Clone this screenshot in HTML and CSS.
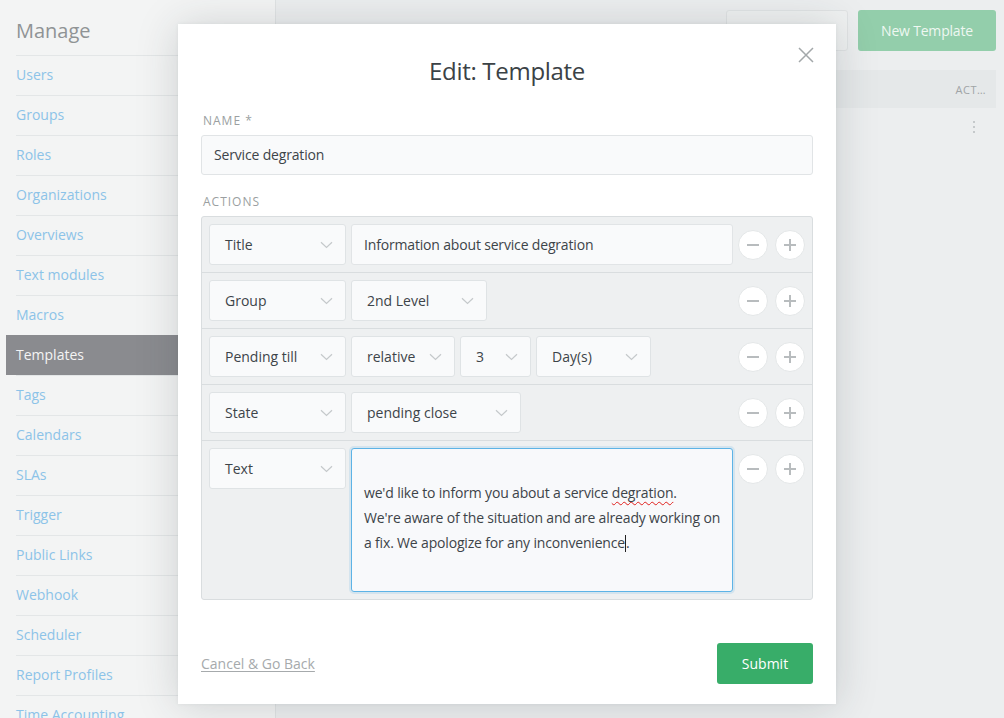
FILE: index.html
```html
<!DOCTYPE html>
<html lang="en">
<head>
<meta charset="utf-8">
<title>Edit: Template</title>
<link rel="stylesheet" href="styles.css">
</head>
<body>
<div class="page">
  <aside class="sidebar">
    <h2 class="side-title">Manage</h2>
    <nav class="side-nav">
      <a class="side-item">Users</a>
      <a class="side-item">Groups</a>
      <a class="side-item">Roles</a>
      <a class="side-item">Organizations</a>
      <a class="side-item">Overviews</a>
      <a class="side-item">Text modules</a>
      <a class="side-item">Macros</a>
      <a class="side-item active">Templates</a>
      <a class="side-item">Tags</a>
      <a class="side-item">Calendars</a>
      <a class="side-item">SLAs</a>
      <a class="side-item">Trigger</a>
      <a class="side-item">Public Links</a>
      <a class="side-item">Webhook</a>
      <a class="side-item">Scheduler</a>
      <a class="side-item">Report Profiles</a>
      <a class="side-item">Time Accounting</a>
    </nav>
  </aside>
  <main class="main">
    <div class="main-head">
      <h1 class="main-title">Templates</h1>
      <div class="head-actions">
        <button class="btn-plain">Import</button>
        <button class="btn-new">New Template</button>
      </div>
    </div>
    <div class="table-head"><span class="th-act">ACT…</span></div>
    <div class="table-row"><span class="kebab"><i></i><i></i><i></i></span></div>
  </main>
</div>

<div class="modal">
  <div class="modal-head">
    <h2 class="modal-title">Edit: Template</h2>
    <span class="close">
      <svg width="16" height="16" viewBox="0 0 16 16"><path d="M1 1L15 15M15 1L1 15" stroke="#a3a8aa" stroke-width="1.5" fill="none"/></svg>
    </span>
  </div>
  <div class="modal-body">
    <div class="label">Name *</div>
    <div class="input">Service degration</div>

    <div class="label label-actions">Actions</div>
    <div class="actions">
      <div class="row">
        <div class="select attr">Title<svg class="chev" width="13" height="8" viewBox="0 0 13 8"><path d="M1 1.2L6.5 6.5L12 1.2" stroke="#c5c9cb" stroke-width="1.2" fill="none"/></svg></div>
        <div class="values">
          <div class="input value-input">Information about service degration</div>
        </div>
        <div class="pm"><span class="circle minus"></span><span class="circle plus"></span></div>
      </div>
      <div class="row">
        <div class="select attr">Group<svg class="chev" width="13" height="8" viewBox="0 0 13 8"><path d="M1 1.2L6.5 6.5L12 1.2" stroke="#c5c9cb" stroke-width="1.2" fill="none"/></svg></div>
        <div class="values">
          <div class="select w136">2nd Level<svg class="chev" width="13" height="8" viewBox="0 0 13 8"><path d="M1 1.2L6.5 6.5L12 1.2" stroke="#c5c9cb" stroke-width="1.2" fill="none"/></svg></div>
        </div>
        <div class="pm"><span class="circle minus"></span><span class="circle plus"></span></div>
      </div>
      <div class="row">
        <div class="select attr">Pending till<svg class="chev" width="13" height="8" viewBox="0 0 13 8"><path d="M1 1.2L6.5 6.5L12 1.2" stroke="#c5c9cb" stroke-width="1.2" fill="none"/></svg></div>
        <div class="values">
          <div class="select w104">relative<svg class="chev" width="13" height="8" viewBox="0 0 13 8"><path d="M1 1.2L6.5 6.5L12 1.2" stroke="#c5c9cb" stroke-width="1.2" fill="none"/></svg></div>
          <div class="select w71">3<svg class="chev" width="13" height="8" viewBox="0 0 13 8"><path d="M1 1.2L6.5 6.5L12 1.2" stroke="#c5c9cb" stroke-width="1.2" fill="none"/></svg></div>
          <div class="select w115">Day(s)<svg class="chev" width="13" height="8" viewBox="0 0 13 8"><path d="M1 1.2L6.5 6.5L12 1.2" stroke="#c5c9cb" stroke-width="1.2" fill="none"/></svg></div>
        </div>
        <div class="pm"><span class="circle minus"></span><span class="circle plus"></span></div>
      </div>
      <div class="row">
        <div class="select attr">State<svg class="chev" width="13" height="8" viewBox="0 0 13 8"><path d="M1 1.2L6.5 6.5L12 1.2" stroke="#c5c9cb" stroke-width="1.2" fill="none"/></svg></div>
        <div class="values">
          <div class="select w170">pending close<svg class="chev" width="13" height="8" viewBox="0 0 13 8"><path d="M1 1.2L6.5 6.5L12 1.2" stroke="#c5c9cb" stroke-width="1.2" fill="none"/></svg></div>
        </div>
        <div class="pm"><span class="circle minus"></span><span class="circle plus"></span></div>
      </div>
      <div class="row row-text">
        <div class="select attr">Text<svg class="chev" width="13" height="8" viewBox="0 0 13 8"><path d="M1 1.2L6.5 6.5L12 1.2" stroke="#c5c9cb" stroke-width="1.2" fill="none"/></svg></div>
        <div class="values">
          <div class="textarea"><br>we'd like to inform you about a service <span class="spell">degration</span>.<br>We're aware of the situation and are already working on<br>a fix. We apologize for any inconvenience<span class="caret"></span>.</div>
        </div>
        <div class="pm"><span class="circle minus"></span><span class="circle plus"></span></div>
      </div>
    </div>
  </div>
  <div class="modal-foot">
    <a class="cancel">Cancel &amp; Go Back</a>
    <button class="submit">Submit</button>
  </div>
</div>
</body>
</html>
```

FILE: styles.css
```css
* { box-sizing: border-box; }
html, body { margin: 0; padding: 0; }
body {
  width: 1004px;
  height: 718px;
  overflow: hidden;
  font-family: "Open Sans", "Noto Sans", sans-serif;
  font-size: 13px;
  color: #3d4449;
  background: #eceeef;
  position: relative;
}
.page {
  display: flex;
  height: 718px;
}
.sidebar {
  width: 276px;
  flex: none;
  background: #f3f4f4;
  border-right: 1px solid #e0e3e4;
  padding: 14px 0 0 6px;
}
.side-title {
  margin: 0 0 0 10px;
  font-weight: 400;
  font-size: 20px;
  line-height: 34px;
  height: 41px;
  color: #8f9395;
}
.side-nav { display: flex; flex-direction: column; }
.side-item {
  display: block;
  height: 40px;
  line-height: 40px;
  padding-left: 10px;
  font-size: 14px;
  color: #8cc3e8;
  background: linear-gradient(#e3e6e7, #e3e6e7) 10px 0 / calc(100% - 10px) 1px no-repeat;
}
.side-item.active {
  background: #8a8b8f;
  color: #f4f4f4;
}
.main {
  flex: 1;
  padding: 10px 8px 0 28px;
}
.main-head {
  display: flex;
  align-items: flex-start;
  justify-content: space-between;
  height: 60px;
}
.main-title {
  margin: 9px 0 0 0;
  font-size: 24px;
  font-weight: 400;
  color: #6b7073;
}
.head-actions { display: flex; gap: 10px; }
.btn-plain {
  width: 122px;
  height: 41px;
  border: 1px solid #e0e3e4;
  border-radius: 3px;
  background: #eff1f1;
  font: inherit;
  color: #9a9ea0;
}
.btn-new {
  width: 138px;
  height: 41px;
  border: 0;
  border-radius: 3px;
  background: #93ceab;
  color: #eef7f1;
  font-family: inherit;
  font-size: 14px;
  letter-spacing: -0.2px;
}
.table-head {
  height: 38px;
  background: #e5e8e9;
  display: flex;
  align-items: center;
  justify-content: flex-end;
  padding-right: 10px;
}
.th-act {
  font-size: 11px;
  letter-spacing: 0.5px;
  color: #a0a4a6;
}
.table-row {
  height: 40px;
  display: flex;
  justify-content: flex-end;
  align-items: center;
  padding-right: 21px;
}
.kebab { display: flex; flex-direction: column; gap: 3px; margin-top: -2px; }
.kebab i { display: block; width: 2px; height: 2px; background: #b9bdbf; border-radius: 1px; }

.modal {
  position: absolute;
  left: 178px;
  top: 24px;
  width: 658px;
  height: 680px;
  background: #fff;
  box-shadow: 0 2px 40px rgba(40, 50, 55, 0.18), 0 0 4px rgba(40, 50, 55, 0.06);
  display: flex;
  flex-direction: column;
}
.modal-head {
  position: relative;
  padding-top: 30px;
  text-align: center;
}
.modal-title {
  margin: 0;
  font-size: 24px;
  line-height: 34px;
  font-weight: 400;
  letter-spacing: -0.3px;
  color: #3b4246;
}
.close {
  position: absolute;
  right: 22px;
  top: 23px;
  width: 16px;
  height: 16px;
  display: block;
}
.close svg { display: block; }
.modal-body {
  padding: 24px 23px 0 23px;
  flex: 1;
}
.label {
  font-size: 12px;
  line-height: 16px;
  padding-top: 1px;
  letter-spacing: 1px;
  text-transform: uppercase;
  color: #9b9fa1;
  margin: 0 0 6px 2px;
}
.label-actions { margin-top: 18px; }
.input {
  height: 40px;
  border: 1px solid #e1e4e6;
  border-radius: 3px;
  background: #f9fafb;
  padding: 0 12px;
  line-height: 38px;
  font-size: 14px;
  letter-spacing: -0.17px;
}
.actions {
  border: 1px solid #d9dddf;
  border-radius: 3px;
  background: #eef0f1;
}
.row {
  display: flex;
  align-items: flex-start;
  gap: 5px;
  padding: 7px;
  border-bottom: 1px solid #d9dddf;
}
.row:last-child { border-bottom: 0; }
.select {
  position: relative;
  height: 41px;
  border: 1px solid #dfe3e5;
  border-radius: 3px;
  background: #f9fafb;
  padding-left: 15px;
  line-height: 39px;
  font-size: 14px;
  flex: none;
}
.attr { width: 137px; }
.w136 { width: 136px; }
.w104 { width: 104px; }
.w71 { width: 71px; }
.w115 { width: 115px; }
.w170 { width: 170px; }
.chev {
  position: absolute;
  right: 12px;
  top: 16px;
  display: block;
}
.values {
  flex: 1;
  display: flex;
  gap: 5px;
}
.value-input {
  flex: 1;
  height: 41px;
  line-height: 39px;
}
.pm {
  display: flex;
  gap: 7px;
  height: 41px;
  align-items: center;
  flex: none;
}
.circle {
  position: relative;
  width: 30px;
  height: 30px;
  border-radius: 50%;
  background: #fff;
  border: 1px solid #e4e7e8;
}
.circle::before, .plus::after {
  content: "";
  position: absolute;
  left: 8px;
  top: 13.5px;
  width: 12px;
  height: 1.5px;
  background: #b8bcbe;
}
.plus::after {
  left: 13.25px;
  top: 8.25px;
  width: 1.5px;
  height: 12px;
}
.textarea {
  flex: 1;
  height: 144px;
  border: 1px solid #5db3e6;
  border-radius: 3px;
  background: #f8f9fb;
  box-shadow: 0 0 0 2px rgba(93, 179, 230, 0.18);
  padding: 6px 12px;
  font-size: 14px;
  letter-spacing: -0.17px;
  line-height: 25px;
  white-space: nowrap;
}
.spell {
  text-decoration: underline wavy #e0201c;
  text-decoration-thickness: 1px;
  text-underline-offset: 3px;
}
.caret {
  display: inline-block;
  width: 1px;
  height: 17px;
  background: #222;
  vertical-align: -4px;
}
.modal-foot {
  display: flex;
  justify-content: space-between;
  align-items: center;
  padding: 0 23px 20px 23px;
}
.cancel {
  color: #a6aaac;
  text-decoration: underline;
  text-underline-offset: 2px;
  font-size: 14px;
}
.submit {
  width: 96px;
  height: 41px;
  border: 0;
  border-radius: 3px;
  background: #38ad69;
  color: #fff;
  font-family: inherit;
  font-size: 14px;
}
```
